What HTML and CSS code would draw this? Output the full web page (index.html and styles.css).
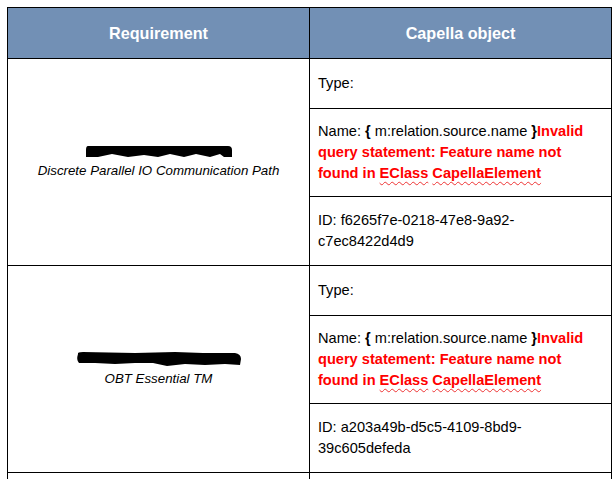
FILE: index.html
```html
<!DOCTYPE html>
<html>
<head>
<meta charset="utf-8">
<link rel="stylesheet" href="styles.css">
</head>
<body>
<div class="page">
<table class="grid">
  <colgroup><col class="c1"><col class="c2"></colgroup>
  <thead>
    <tr class="head"><th>Requirement</th><th>Capella object</th></tr>
  </thead>
  <tbody>
    <tr class="r-type">
      <td rowspan="3" class="req">
        <svg class="redact" width="150" height="14" viewBox="0 0 150 14"><path d="M4 1 H144 Q148 1 148 5 V12 H140 L136 9 L126 12 L112 9 L100 12 L86 9 L74 12 L60 10 L44 12 L28 9 L14 12 L2 12 V5 Q2 1 4 1 Z" fill="#000"/></svg>
        <div class="req-name">Discrete Parallel IO Communication Path</div>
      </td>
      <td>Type:</td>
    </tr>
    <tr class="r-name">
      <td>Name: <b>{</b> m:relation.source.name <b>}</b><span class="err">Invalid query statement: Feature name not found in <span class="sp">EClass</span> <span class="sp">CapellaElement</span></span></td>
    </tr>
    <tr class="r-id">
      <td>ID: f6265f7e-0218-47e8-9a92-c7ec8422d4d9</td>
    </tr>
    <tr class="r-type">
      <td rowspan="3" class="req">
        <svg class="redact" width="168" height="16" viewBox="0 0 168 16"><path d="M3 3 Q2 1 8 1 L60 2 L100 1 L128 2 L160 2 Q166 3 166 8 L165 14 L150 13 L130 14 L110 13 L92 15 L78 12 L60 12 L40 13 L20 12 L4 12 Q1 9 3 3 Z" fill="#000"/></svg>
        <div class="req-name">OBT Essential TM</div>
      </td>
      <td>Type:</td>
    </tr>
    <tr class="r-name">
      <td>Name: <b>{</b> m:relation.source.name <b>}</b><span class="err">Invalid query statement: Feature name not found in <span class="sp">EClass</span> <span class="sp">CapellaElement</span></span></td>
    </tr>
    <tr class="r-id">
      <td>ID: a203a49b-d5c5-4109-8bd9-39c605defeda</td>
    </tr>
    <tr class="r-type">
      <td rowspan="3" class="req"></td>
      <td></td>
    </tr>
  </tbody>
</table>
</div>
</body>
</html>
```

FILE: styles.css
```css
html, body {
  margin: 0;
  padding: 0;
  background: #ffffff;
  overflow: hidden;
}
.page {
  padding: 7px 0 0 7px;
  font-family: "Liberation Sans", Arial, sans-serif;
  color: #000;
}
.grid {
  border-collapse: collapse;
  width: 604px;
  table-layout: fixed;
}
.c1 { width: 302px; }
.c2 { width: 302px; }
.grid th, .grid td {
  border: 1px solid #000;
  padding: 0 8px;
  vertical-align: middle;
  font-size: 14.6px;
  line-height: 21px;
  text-align: left;
}
.head th {
  background: #7290b5;
  color: #ffffff;
  font-weight: bold;
  font-size: 16.2px;
  text-align: center;
  height: 50px;
}
.r-type td { height: 49px; }
.r-name td { height: 87px; }
.r-id td { height: 68px; }
.grid td.req {
  text-align: center;
  padding: 0 4px;
}
.redact {
  display: block;
  margin: 0 auto;
}
.req-name {
  font-style: italic;
  font-size: 13.3px;
  line-height: 16px;
  margin-top: 4px;
}
.err {
  color: #ff0000;
  font-weight: bold;
}
.sp {
  text-decoration: underline wavy #e33;
  text-decoration-thickness: 1px;
  text-underline-offset: 3px;
}
```
